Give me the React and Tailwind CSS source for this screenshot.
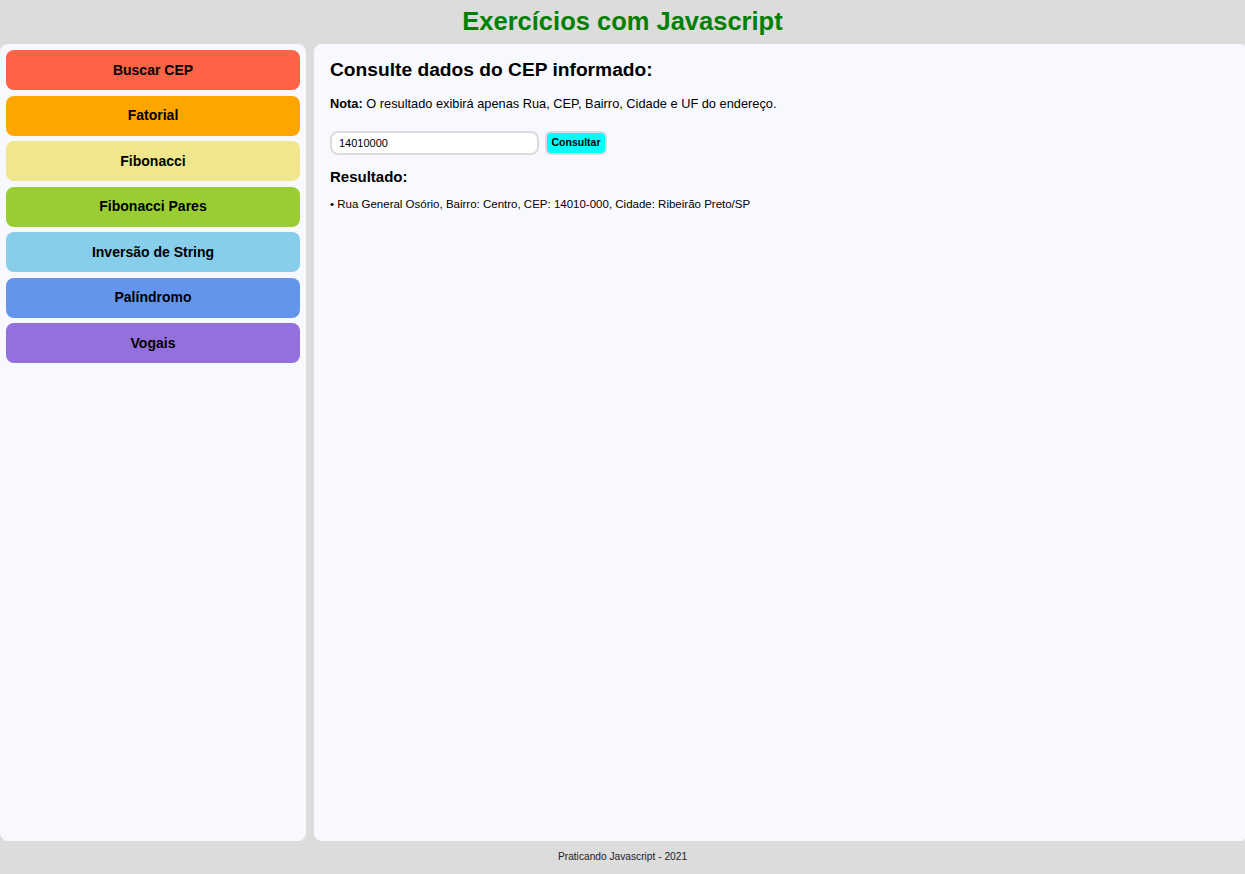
import React, { useState } from "react";

const exercicios = [
  { nome: "Buscar CEP", cor: "bg-[#ff6347]" },
  { nome: "Fatorial", cor: "bg-[#ffa500]" },
  { nome: "Fibonacci", cor: "bg-[#f0e68c]" },
  { nome: "Fibonacci Pares", cor: "bg-[#9acd32]" },
  { nome: "Inversão de String", cor: "bg-[#87ceeb]" },
  { nome: "Palíndromo", cor: "bg-[#6495ed]" },
  { nome: "Vogais", cor: "bg-[#9370db]" },
];

function App() {
  const [cep, setCep] = useState("14010000");

  return (
    <div className="flex flex-col h-[874px] bg-[#dcdcdc] font-['Liberation_Sans',Arial,sans-serif] text-black">
      <header className="h-[44px] flex items-center justify-center pb-[2px]">
        <h1 className="text-[25.5px] font-bold text-[#008000]">Exercícios com Javascript</h1>
      </header>

      <div className="flex flex-1 gap-2">
        {/* menu lateral */}
        <nav className="w-[306px] bg-[#f8f8ff] rounded-lg px-[6px] pt-[6px] flex flex-col gap-[5.5px]">
          {exercicios.map((ex) => (
            <button
              key={ex.nome}
              className={`${ex.cor} h-[40px] w-full rounded-lg text-[14px] font-bold text-black`}
            >
              {ex.nome}
            </button>
          ))}
        </nav>

        <main className="flex-1 bg-[#f8f8ff] rounded-l-lg rounded-r-sm px-4 pt-[14px]">
          <h2 className="text-[19.2px] font-bold leading-[24px]">Consulte dados do CEP informado:</h2>
          <p className="text-[12.8px] mt-[14px] leading-[16px]">
            <strong>Nota:</strong> O resultado exibirá apenas Rua, CEP, Bairro, Cidade e UF do endereço.
          </p>

          <div className="flex items-center gap-[6px] mt-[19px]">
            <input
              value={cep}
              onChange={(e) => setCep(e.target.value)}
              className="w-[209px] h-[24px] bg-white border-2 border-[#dcdcdc] rounded-lg px-[7px] text-[11px] outline-none"
            />
            <button className="h-[24px] w-[62px] bg-[#00ffff] border-2 border-[#dcdcdc] rounded-md text-[10.5px] font-bold">
              Consultar
            </button>
          </div>

          <h3 className="text-[15px] font-bold mt-[13px] leading-[18px]">Resultado:</h3>
          <ul className="mt-[11px] text-[11.5px] leading-[14px]">
            <li>• Rua General Osório, Bairro: Centro, CEP: 14010-000, Cidade: Ribeirão Preto/SP</li>
          </ul>
        </main>
      </div>

      <footer className="h-[33px] flex items-start pt-[8px] justify-center text-[10.2px] text-[#222]">
        Praticando Javascript - 2021
      </footer>
    </div>
  );
}

export default App;
